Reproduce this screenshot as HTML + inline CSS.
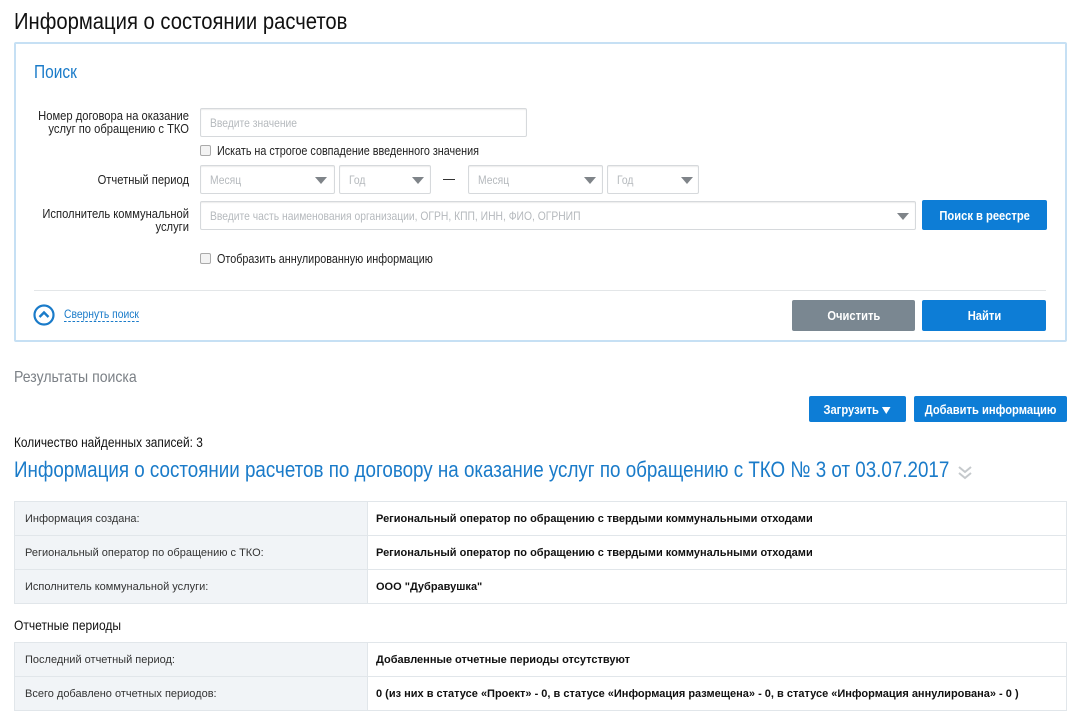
<!DOCTYPE html>
<html><head><meta charset="utf-8"><style>
*{box-sizing:border-box;margin:0;padding:0}
body{width:1081px;height:725px;background:#fff;position:relative;overflow:hidden;font-family:"Liberation Sans",sans-serif;color:#222}
.a{position:absolute;white-space:nowrap}
.c{transform:scaleX(.86);transform-origin:0 0}
.s{display:inline-block;transform:scaleX(.86);transform-origin:0 50%;white-space:nowrap}
.sc{display:inline-block;transform:scaleX(.86);transform-origin:50% 50%;white-space:nowrap}
.inp{position:absolute;border:1px solid #d6d9dc;border-radius:2px;background:#fff;box-shadow:inset 0 1px 1px rgba(0,0,0,.08);font-size:12px;color:#b5b9bd;padding-left:9px;display:flex;align-items:center;overflow:hidden}
.tri{position:absolute;width:0;height:0;border-left:6px solid transparent;border-right:6px solid transparent;border-top:7px solid #7f8489}
.btn{position:absolute;border-radius:2px;color:#fff;font-weight:bold;font-size:13px;display:flex;align-items:center;justify-content:center;background:#0d7dd6;white-space:nowrap}
.cb{position:absolute;width:11px;height:11px;border:1px solid #aaa;border-radius:2px;background:#f3f3f3}
.lbl{position:absolute;text-align:right;font-size:13px;line-height:13px;color:#222;white-space:nowrap;transform:scaleX(.86);transform-origin:100% 0}
table{position:absolute;left:14px;width:1053px;border-collapse:collapse;font-size:11px}
td{border:1px solid #e1e6ea;height:34px;padding-left:10px}
td.l{background:#f1f4f7;width:353px;color:#333}
td.r{font-weight:bold;color:#111;padding-left:8px}
</style></head><body>
<div class="a" style="left:14px;top:8px;font-size:23px;color:#111;transform:scaleX(.88);transform-origin:0 0">Информация о состоянии расчетов</div>
<div class="a" style="left:14px;top:42px;width:1053px;height:300px;border:2px solid #c6e0f4;border-radius:2px"></div>
<div class="a c" style="left:34px;top:62px;font-size:18px;color:#1a7bc9">Поиск</div>
<div class="lbl" style="left:0;width:189px;top:109px">Номер договора на оказание<br>услуг по обращению с ТКО</div>
<div class="inp" style="left:200px;top:108px;width:327px;height:29px"><span class="s">Введите значение</span></div>
<div class="cb" style="left:200px;top:145px"></div>
<div class="a" style="left:217px;top:143px;font-size:13px;transform:scaleX(.83);transform-origin:0 0">Искать на строгое совпадение введенного значения</div>
<div class="lbl" style="left:0;width:189px;top:173px">Отчетный период</div>
<div class="inp" style="left:200px;top:165px;width:135px;height:29px"><span class="s">Месяц</span></div><div class="tri" style="left:315px;top:177px"></div>
<div class="inp" style="left:339px;top:165px;width:92px;height:29px"><span class="s">Год</span></div><div class="tri" style="left:412px;top:177px"></div>
<div class="a" style="left:443px;top:179px;width:12px;height:1px;background:#333"></div>
<div class="inp" style="left:468px;top:165px;width:135px;height:29px"><span class="s">Месяц</span></div><div class="tri" style="left:584px;top:177px"></div>
<div class="inp" style="left:607px;top:165px;width:92px;height:29px"><span class="s">Год</span></div><div class="tri" style="left:681px;top:177px"></div>
<div class="lbl" style="left:0;width:189px;top:207px">Исполнитель коммунальной<br>услуги</div>
<div class="inp" style="left:200px;top:201px;width:716px;height:29px;font-size:12px"><span class="s">Введите часть наименования организации, ОГРН, КПП, ИНН, ФИО, ОГРНИП</span></div><div class="tri" style="left:897px;top:213px"></div>
<div class="btn" style="left:922px;top:200px;width:125px;height:30px"><span class="sc">Поиск в реестре</span></div>
<div class="cb" style="left:200px;top:253px"></div>
<div class="a" style="left:217px;top:251px;font-size:13px;transform:scaleX(.83);transform-origin:0 0">Отобразить аннулированную информацию</div>
<div class="a" style="left:34px;top:290px;width:1012px;height:1px;background:#e3e6e8"></div>
<svg class="a" style="left:33px;top:304px" width="22" height="22"><circle cx="11" cy="11" r="9.5" fill="none" stroke="#1a7bc9" stroke-width="2.2"/><path d="M6.5 13 L11 8.5 L15.5 13" fill="none" stroke="#1a7bc9" stroke-width="2.4"/></svg>
<div class="a c" style="left:64px;top:307px;font-size:12px;color:#1a7bc9;border-bottom:1px dashed #1a7bc9;line-height:14px">Свернуть поиск</div>
<div class="btn" style="left:792px;top:300px;width:123px;height:31px;background:#7a8791"><span class="sc">Очистить</span></div>
<div class="btn" style="left:922px;top:300px;width:124px;height:31px"><span class="sc">Найти</span></div>
<div class="a" style="left:14px;top:369px;font-size:16px;color:#7b8086;transform:scaleX(.88);transform-origin:0 0">Результаты поиска</div>
<div class="btn" style="left:809px;top:396px;width:97px;height:26px"><span class="sc">Загрузить <span style="display:inline-block;border-left:5px solid transparent;border-right:5px solid transparent;border-top:7px solid #fff"></span></span></div>
<div class="btn" style="left:914px;top:396px;width:153px;height:26px"><span class="sc">Добавить информацию</span></div>
<div class="a" style="left:14px;top:435px;font-size:13.5px;color:#111;transform:scaleX(.88);transform-origin:0 0">Количество найденных записей: 3</div>
<div class="a" style="left:14px;top:457px;font-size:22.5px;color:#1a7bc9;transform:scaleX(.835);transform-origin:0 0">Информация о состоянии расчетов по договору на оказание услуг по обращению с ТКО № 3 от 03.07.2017</div>
<svg class="a" style="left:957px;top:464px" width="16" height="16"><path d="M2 3 L8 8 L14 3 M2 9 L8 14 L14 9" fill="none" stroke="#c5c9cc" stroke-width="2"/></svg>
<table style="top:501px"><tr><td class="l">Информация создана:</td><td class="r">Региональный оператор по обращению с твердыми коммунальными отходами</td></tr>
<tr><td class="l">Региональный оператор по обращению с ТКО:</td><td class="r">Региональный оператор по обращению с твердыми коммунальными отходами</td></tr>
<tr><td class="l">Исполнитель коммунальной услуги:</td><td class="r">ООО "Дубравушка"</td></tr></table>
<div class="a c" style="left:14px;top:617px;font-size:14px;color:#111">Отчетные периоды</div>
<table style="top:642px"><tr><td class="l">Последний отчетный период:</td><td class="r">Добавленные отчетные периоды отсутствуют</td></tr>
<tr><td class="l">Всего добавлено отчетных периодов:</td><td class="r">0 (из них в статусе «Проект» - 0, в статусе «Информация размещена» - 0, в статусе «Информация аннулирована» - 0 )</td></tr></table>
</body></html>
